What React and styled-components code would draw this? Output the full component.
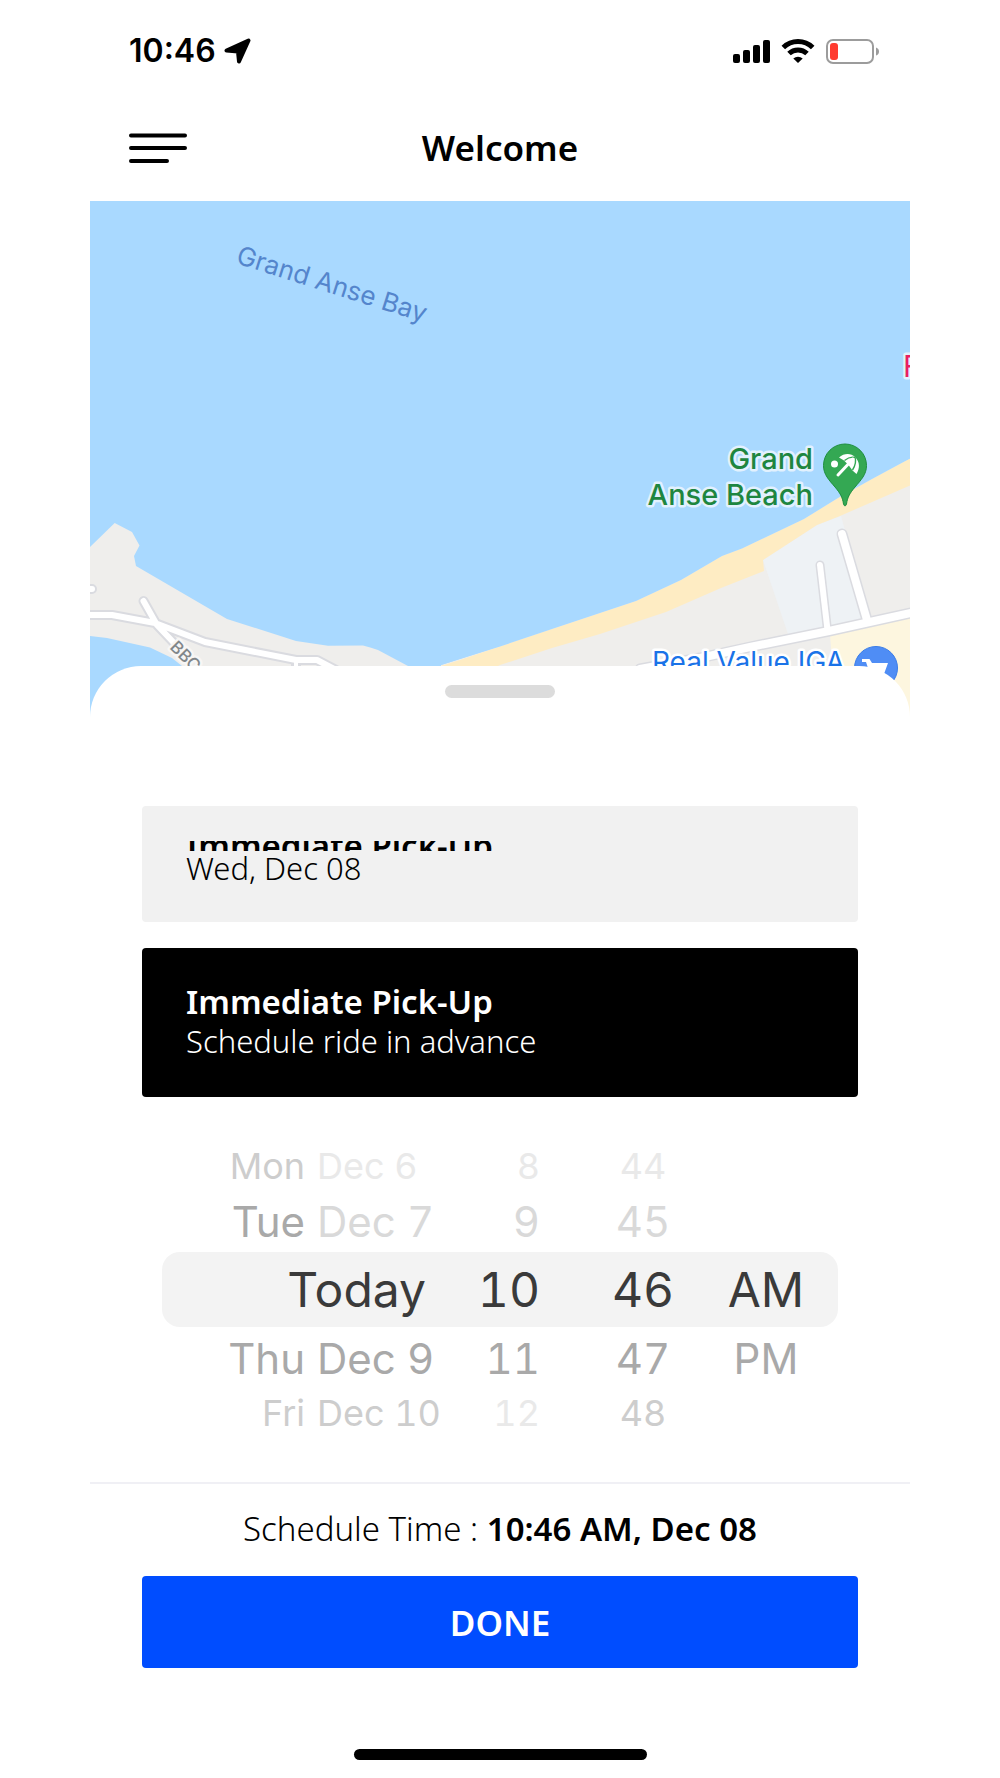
import React from "react";
import styled, { createGlobalStyle } from "styled-components";

const dates = [
  { size: "far", day: "Mon", date: "Dec 6", hour: "8", minute: "44", past: true },
  { size: "near", day: "Tue", date: "Dec 7", hour: "9", minute: "45", past: true },
  { size: "current", day: "Today", hour: "10", minute: "46", period: "AM" },
  { size: "near", day: "Thu", date: "Dec 9", hour: "11", minute: "47", period: "PM" },
  { size: "far", day: "Fri", date: "Dec 10", hour: "12", minute: "48" },
];

const rowStyles = {
  far: { height: "48px", font: "36px", color: "#cdcdcd", faded: "#e9e9e9" },
  near: { height: "62px", font: "42px", color: "#a9a9a9", faded: "#d9d9d9" },
  current: { height: "75px", font: "48px", color: "#3a3a3a", faded: "#3a3a3a" },
};

const StatusIcons = () => (
  <svg width="148" height="26" viewBox="0 0 148 26" aria-hidden="true">
    <rect x="1" y="16" width="7" height="9" rx="2" />
    <rect x="11" y="12" width="7" height="13" rx="2" />
    <rect x="21" y="7" width="7" height="18" rx="2" />
    <rect x="31" y="2" width="7" height="23" rx="2" />
    <g fill="none" stroke="#000" strokeWidth="5">
      <path d="M51.300 9.500a21 21 0 0 1 29.400 0" />
      <path d="M57 15.500a13 13 0 0 1 18 0" />
    </g>
    <path d="M61.300 20.500a7 7 0 0 1 9.400 0L66 25z" />
    <rect x="95" y="2" width="46" height="23" rx="6" fill="none" stroke="#9c9c9c" strokeWidth="2" />
    <rect x="98" y="5" width="8" height="17" rx="3" fill="#ff3b30" />
    <path d="M144 9.500q3 1 3 4t-3 4z" fill="#9c9c9c" />
  </svg>
);

const Map = () => (
  <MapSvg viewBox="90 201 820 516" preserveAspectRatio="xMidYMin slice" role="img" aria-label="Grand Anse map">
    {/* land */}
    <g fill="#efeeec">
      <path d="M90 547 114.700 523 132 532 139.500 545.500 134 556 136 566 227 619 296 641 328 645.700 363 645.500Q370 647 378 650L408 666V717H182V666L172 658 150 647.500 107 638 90 636Z" />
      <path d="M441 665 500 646 911 458V717H441Z" />
    </g>
    <path d="M763 560 817 525 841 516 870 620 789 637Z" fill="#eef2f5" />
    <path d="M830 634 911 618V717H836Z" fill="#fdf6df" />
    <path
      d="M441 666 460 660 500 646.500 555 628 636 601 681 580 722 556 742 548.500 804 519 838 498 872 479 911 458V485L840 516 817 525 763 560 764 571 721 588 666 612 600 634 552 648 500 665 480 675 441 667Z"
      fill="#feecc3"
    />
    <path d="M441 665 500 646.500 555 628 636 601 681 580 722 556 742 548.500 804 519 838 498 872 479 911 458V400H441Z" fill="#a9d9ff" />

    {/* roads: casing first, then the white surface */}
    <g fill="none" strokeLinecap="round" strokeLinejoin="round">
      <g stroke="#dadbe0">
        <path d="M86 615H112L155 623 205 642 296 660H317L336 670M84 589H92M143.500 601 157 625 175 644M296 660V670" strokeWidth="10" />
        <path d="M640 669 700 658 750 647 829 631 915 612" strokeWidth="11" />
        <path d="M842 534 867 620" strokeWidth="11" />
        <path d="M820 565 827.500 630" strokeWidth="9" />
      </g>
      <g stroke="#fff">
        <path d="M86 615H112L155 623 205 642 296 660H317L336 670M84 589H92M143.500 601 157 625 175 644" strokeWidth="6" />
        <path d="M296 660V670" strokeWidth="4" />
        <path d="M640 669 700 658 750 647 829 631 915 612" strokeWidth="8" />
        <path d="M842 534 867 620" strokeWidth="8" />
        <path d="M820 565 827.500 630" strokeWidth="6" />
      </g>
    </g>

    {/* labels */}
    <MapLabel transform="translate(235 263) rotate(17.500)" $size={26} $color="#5485cc">
      Grand Anse Bay
    </MapLabel>
    <MapLabel transform="translate(169 648) rotate(45)" $size={17} $color="#82878a" $weight={500} $halo="#f7f6f5">
      BBC
    </MapLabel>
    <MapLabel x="903" y="377" $size={30} $color="#e91e63" $halo="#e2f1fe">
      F
    </MapLabel>
    <MapLabel x="813" y="469" textAnchor="end" $size={29} $color="#1e8640" $weight={500} $halo="#e2f1fe">
      Grand
    </MapLabel>
    <MapLabel x="813" y="505" textAnchor="end" $size={29} $color="#1e8640" $weight={500} $halo="#e2f1fe">
      Anse Beach
    </MapLabel>
    <MapLabel x="652" y="672" $size={28} $color="#1a73e8" $halo="#fff">
      Real Value IGA
    </MapLabel>

    {/* beach pin */}
    <path
      d="M845 444a21.500 21.500 0 0 0-21.500 21.500c0 9 5.500 14.500 11.500 21.500 5 6 7.500 10 8.500 17q1.500 4 3 0c1-7 3.500-11 8.500-17 6-7 11.500-12.500 11.500-21.500A21.500 21.500 0 0 0 845 444z"
      fill="#34a853"
      stroke="#1e8e3e"
    />
    <circle cx="834.500" cy="464" r="3.500" fill="#fff" />
    <path d="M839 457.500C844 453 851 453 855 457C860 462 860 468 856.500 474L852.500 470.500 848.500 465 844 460.500Z" fill="#fff" />
    <path d="M844.500 460.500Q850 456 855 457.500Q857 463 852.500 470" fill="none" stroke="#34a853" strokeWidth="1.400" />
    <path d="M838 475 853 459" stroke="#fff" strokeWidth="3" strokeLinecap="round" />

    {/* grocery pin */}
    <circle cx="876" cy="668" r="21.500" fill="#4f8df5" stroke="#3b7de8" />
    <path d="M862 659h7.500l2.500 4h16l-4 11h-14l-4-12h-4z" fill="#fff" />
  </MapSvg>
);

const App = () => {
  return (
    <Page>
      <GlobalStyle />
      <StatusBar>
        <Clock>
          10:46
          <svg width="27" height="26" viewBox="0 0 27 26" aria-hidden="true">
            <path d="M24.500 2.500 15 23.500 14 13.500 2.500 12.500z" stroke="#000" strokeWidth="4" strokeLinejoin="round" />
          </svg>
        </Clock>
        <StatusIcons />
      </StatusBar>
      <Header>
        <MenuButton aria-label="Menu">
          <svg width="60" height="32" viewBox="0 0 60 32">
            <path d="M2 3.500H56M2 16H56M2 29H38" stroke="#000" strokeWidth="4" strokeLinecap="round" />
          </svg>
        </MenuButton>
        <h1>Welcome</h1>
      </Header>
      <Map />
      <Sheet>
        <Handle />
        <Options>
          <Option>
            <Collapsed>
              <OptionTitle>Immediate Pick-Up</OptionTitle>
            </Collapsed>
            <OptionText>Wed, Dec 08</OptionText>
          </Option>
          <Option $selected>
            <OptionTitle>Immediate Pick-Up</OptionTitle>
            <OptionText>Schedule ride in advance</OptionText>
          </Option>
        </Options>
        <Picker>
          {dates.map((row) => (
            <PickerRow key={row.minute} $look={rowStyles[row.size]}>
              {row.date ? (
                <DateCell>
                  <Weekday>{row.day}</Weekday>
                  <MonthDay $faded={row.past}>{row.date}</MonthDay>
                </DateCell>
              ) : (
                <DateCell>
                  <Today>{row.day}</Today>
                </DateCell>
              )}
              <HourCell $faded={row.past || row.hour === "12"}>{row.hour}</HourCell>
              <Cell $faded={row.past}>{row.minute}</Cell>
              {row.period && <Cell>{row.period}</Cell>}
            </PickerRow>
          ))}
        </Picker>
        <Footer>
          <Summary>
            Schedule Time : <strong>10:46 AM, Dec 08</strong>
          </Summary>
          <DoneButton>DONE</DoneButton>
          <HomeBar />
        </Footer>
      </Sheet>
    </Page>
  );
};

const GlobalStyle = createGlobalStyle`
  * {
    box-sizing: border-box;
  }
  body {
    margin: 0;
    background: #fff;
    color: #000;
    font-family: "Noto Sans", "Open Sans", sans-serif;
  }
  button {
    border: none;
    background: none;
    padding: 0;
    margin: 0;
    color: inherit;
    font: inherit;
    cursor: pointer;
  }
`;

const Page = styled.div`
  padding: 0 9%;
`;

const StatusBar = styled.div`
  display: flex;
  align-items: center;
  justify-content: space-between;
  height: 101px;
  padding: 0 30px 0 39px;
`;

const Clock = styled.div`
  display: flex;
  align-items: center;
  gap: 8px;
  font-family: Inter, sans-serif;
  font-size: 32px;
  font-weight: 600;
`;

const Header = styled.header`
  display: grid;
  grid-template-columns: 1fr auto 1fr;
  align-items: center;
  height: 100px;
  padding: 0 39px 6px;
  h1 {
    margin: 0;
    font-size: 35px;
    font-weight: 600;
    line-height: 48px;
  }
`;

const MenuButton = styled.button`
  display: flex;
  justify-self: start;
`;

const MapSvg = styled.svg`
  display: block;
  width: 100%;
  height: 516px;
  background: #a9d9ff;
`;

const MapLabel = styled.text`
  font-family: Inter, sans-serif;
  font-size: ${({ $size }) => $size}px;
  font-weight: ${({ $weight }) => $weight || 400};
  fill: ${({ $color }) => $color};
  stroke: ${({ $halo }) => $halo || "none"};
  stroke-width: 5px;
  stroke-linejoin: round;
  paint-order: stroke;
`;

const Sheet = styled.main`
  position: relative;
  display: flex;
  flex-direction: column;
  margin-top: -51px;
  padding-top: 19px;
  border-radius: 51px 51px 0 0;
  background: #fff;
`;

const Handle = styled.div`
  align-self: center;
  width: 110px;
  height: 13px;
  border-radius: 7px;
  background: #dcdcdc;
`;

const Options = styled.div`
  display: flex;
  flex-direction: column;
  gap: 26px;
  padding: 108px 52px 45px;
`;

const Option = styled.button`
  display: flex;
  flex-direction: column;
  align-items: flex-start;
  padding: ${({ $selected }) => ($selected ? "32px 44px 39px" : "35px 44px 37px")};
  border-radius: 4px;
  background: ${({ $selected }) => ($selected ? "#000" : "#f1f1f1")};
  color: ${({ $selected }) => ($selected ? "#fff" : "#000")};
`;

const Collapsed = styled.span`
  display: flex;
  align-items: center;
  height: 10px;
  overflow: hidden;
`;

const OptionTitle = styled.span`
  font-size: 33px;
  font-weight: 600;
  line-height: 44px;
`;

const OptionText = styled.span`
  font-size: 31px;
  font-weight: 300;
  line-height: 34px;
`;

const Picker = styled.div`
  padding: 0 72px 45px;
  font-family: Inter, sans-serif;
`;

const PickerRow = styled.div`
  display: grid;
  grid-template-columns: 304fr 116fr 122fr 124fr 10fr;
  align-items: center;
  height: ${({ $look }) => $look.height};
  border-radius: 18px;
  background: ${({ $look }) => ($look === rowStyles.current ? "#f3f3f3" : "none")};
  color: ${({ $look }) => $look.color};
  font-size: ${({ $look }) => $look.font};
  font-variant-numeric: tabular-nums;
  --faded: ${({ $look }) => $look.faded};
`;

const Cell = styled.button`
  color: ${({ $faded }) => ($faded ? "var(--faded)" : "inherit")};
`;

const HourCell = styled(Cell)`
  padding-right: 42px;
  text-align: right;
`;

const DateCell = styled.button`
  display: grid;
  grid-template-columns: 143fr 149fr;
  column-gap: 12px;
`;

const Weekday = styled.span`
  text-align: right;
`;

const MonthDay = styled.span`
  color: ${({ $faded }) => ($faded ? "var(--faded)" : "inherit")};
  text-align: left;
`;

const Today = styled.span`
  grid-column: 1 / -1;
  padding-right: 40px;
  text-align: right;
`;

const Footer = styled.footer`
  display: flex;
  flex-direction: column;
  padding: 23px 52px 18px;
  border-top: 2px solid #f0f0f5;
`;

const Summary = styled.p`
  margin: 0 0 25px;
  font-size: 33px;
  font-weight: 300;
  line-height: 44px;
  text-align: center;
  strong {
    font-weight: 600;
  }
`;

const DoneButton = styled.button`
  height: 92px;
  border-radius: 4px;
  background: #004dff;
  color: #fff;
  font-size: 35px;
  font-weight: 600;
`;

const HomeBar = styled.div`
  align-self: center;
  width: 293px;
  height: 11px;
  margin-top: 81px;
  border-radius: 6px;
  background: #000;
`;

export default App;
